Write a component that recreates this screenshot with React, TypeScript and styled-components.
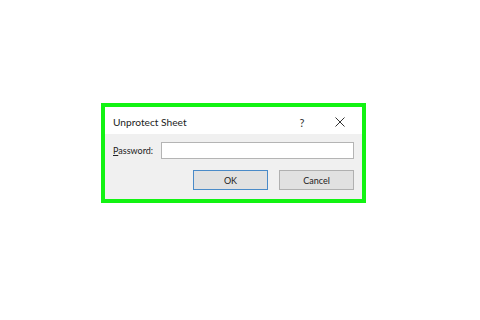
import React from "react";
import styled, { createGlobalStyle } from "styled-components";

const Global = createGlobalStyle`
  html, body { margin: 0; padding: 0; background: #ffffff; }
  body { font-family: Lato, "Noto Sans", sans-serif; }
`;

const Page = styled.div`
  width: 480px;
  height: 320px;
  display: flex;
  align-items: flex-start;
  padding: 103px 0 0 101px;
  box-sizing: border-box;
`;

const Dialog = styled.div`
  width: 265px;
  height: 100px;
  box-sizing: border-box;
  border: 4px solid #12f312;
  display: flex;
  flex-direction: column;
  background: #f0f0f0;
`;

const TitleBar = styled.div`
  height: 28px;
  background: #ffffff;
  display: flex;
  align-items: center;
  padding: 0 0 0 8px;
  color: #222;
`;

const Title = styled.div`
  flex: 1;
  font-size: 10.2px;
  line-height: 1;
  padding-top: 3px;
`;

const Help = styled.div`
  font-size: 11px;
  width: 14px;
  text-align: center;
  margin-right: 23px;
  color: #333;
  padding-top: 3px;
`;

const Close = styled.div`
  width: 16px;
  margin-right: 14px;
  display: flex;
  align-items: center;
  justify-content: center;
  padding-top: 3px;
`;

const Body = styled.div`
  flex: 1;
  display: flex;
  flex-direction: column;
  padding: 8px 8px 9px 8px;
`;

const Row = styled.div`
  display: flex;
  align-items: center;
`;

const Label = styled.label`
  flex: 0 0 48px;
  white-space: nowrap;
  font-size: 9px;
  color: #222;
  u { text-decoration: underline; }
`;

const Input = styled.div`
  flex: 1;
  height: 17px;
  box-sizing: border-box;
  border: 1px solid #b4b4b4;
  background: #ffffff;
`;

const Buttons = styled.div`
  display: flex;
  justify-content: flex-end;
  gap: 11px;
  margin-top: 11px;
`;

const Button = styled.div<{ $primary?: boolean; $w: number }>`
  width: ${(p) => p.$w}px;
  height: 20px;
  box-sizing: border-box;
  border: 1px solid ${(p) => (p.$primary ? "#4a8ac8" : "#b0b0b0")};
  background: #e1e1e1;
  display: flex;
  align-items: center;
  justify-content: center;
  font-size: 9px;
  color: #222;
`;

export default function App() {
  return (
    <>
      <Global />
      <Page>
        <Dialog>
          <TitleBar>
            <Title>Unprotect Sheet</Title>
            <Help>?</Help>
            <Close>
              <svg width="10" height="10" viewBox="0 0 10 10">
                <path d="M0.5 0.5 L9.5 9.5 M9.5 0.5 L0.5 9.5" stroke="#333" strokeWidth="1" fill="none" />
              </svg>
            </Close>
          </TitleBar>
          <Body>
            <Row>
              <Label>
                <u>P</u>assword:
              </Label>
              <Input />
            </Row>
            <Buttons>
              <Button $primary $w={75}>OK</Button>
              <Button $w={75}>Cancel</Button>
            </Buttons>
          </Body>
        </Dialog>
      </Page>
    </>
  );
}
